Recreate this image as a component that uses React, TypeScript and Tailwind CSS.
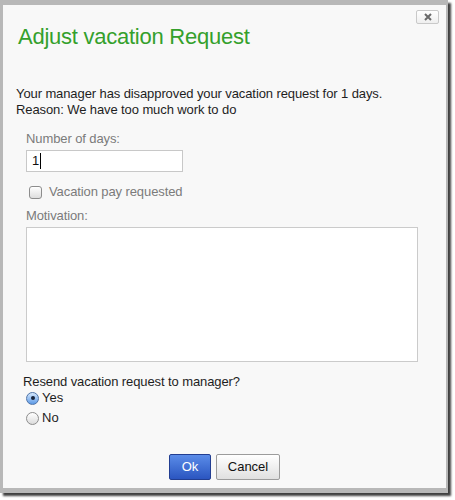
import React from 'react';

const font = { fontFamily: '"Liberation Sans", Arial, sans-serif' };

function Checkbox() {
    return (
        <span className="block w-[13px] h-[13px] rounded-[3px] border border-[#8d8d8d] bg-gradient-to-b from-white to-[#dedede] shadow-[inset_0_1px_0_#fff]" />
    );
}

function Radio({ checked }: { checked?: boolean }) {
    if (checked) {
        return (
            <span className="flex items-center justify-center w-[13px] h-[13px] rounded-full border border-[#4f74a8] bg-gradient-to-b from-[#d6e8fc] to-[#5c9ae6]">
                <span className="block w-[4px] h-[4px] rounded-full bg-[#17233a]" />
            </span>
        );
    }
    return (
        <span className="block w-[13px] h-[13px] rounded-full border border-[#8d8d8d] bg-gradient-to-b from-white to-[#dcdcdc]" />
    );
}

export default function App() {
    return (
        <div className="w-[455px] h-[500px] bg-white overflow-hidden" style={font}>
            {/* frame */}
            <div className="w-[448px] h-[493px] bg-[#b8b8b8] pt-[5px] pl-[3px] shadow-[3px_3px_2px_rgba(0,0,0,0.75)]">
                <div className="relative w-[443px] h-[483px] bg-[#f8f8f8] flex flex-col">
                    {/* close */}
                    <button className="absolute top-[5px] right-[7px] w-[23px] h-[14px] flex items-center justify-center rounded-[2px] border border-[#c9c9c9] bg-gradient-to-b from-white to-[#efefef]">
                        <svg width="8" height="8" viewBox="0 0 8 8">
                            <path d="M1 1L7 7M7 1L1 7" stroke="#6a6a6a" strokeWidth="2" />
                        </svg>
                    </button>

                    <h1 className="mt-[19px] ml-[15px] text-[22px] leading-[26px] tracking-[-0.25px] text-[#34a02c] font-normal">
                        Adjust vacation Request
                    </h1>

                    <p className="mt-[36px] ml-[13px] text-[13px] leading-[16px] tracking-[-0.1px] text-[#1e1e1e]">
                        Your manager has disapproved your vacation request for 1 days.
                        <br />
                        Reason: We have too much work to do
                    </p>

                    {/* form */}
                    <div className="ml-[23px] flex flex-col text-[13px] leading-[16px] tracking-[-0.1px]">
                        <label className="mt-[13px] text-[#7b7b7b]">Number of days:</label>
                        <div className="mt-[3px] w-[157px] h-[22px] border border-[#c8c8c8] bg-white flex items-center pl-[5px] text-[#111]">
                            <span className="text-[13px]">1</span>
                            <span className="block w-px h-[16px] bg-black ml-[1px]" />
                        </div>

                        <div className="mt-[12px] flex items-center gap-[7px] pl-[3px] h-[16px]">
                            <Checkbox />
                            <span className="text-[#7b7b7b]">Vacation pay requested</span>
                        </div>

                        <label className="mt-[8px] text-[#7b7b7b]">Motivation:</label>
                        <div className="mt-[3px] w-[392px] h-[135px] border border-[#cbcbcb] bg-white" />
                    </div>

                    <p className="mt-[12px] ml-[20px] text-[13px] leading-[16px] tracking-[-0.1px] text-[#1e1e1e]">
                        Resend vacation request to manager?
                    </p>
                    <div className="ml-[23px] flex flex-col gap-[4px] text-[13px] leading-[16px] text-[#1e1e1e]">
                        <div className="flex items-center gap-[3px] h-[16px]">
                            <Radio checked />
                            <span>Yes</span>
                        </div>
                        <div className="flex items-center gap-[3px] h-[16px]">
                            <Radio />
                            <span>No</span>
                        </div>
                    </div>

                    {/* buttons */}
                    <div className="mt-[28px] flex justify-center gap-[5px] text-[13px]">
                        <button className="w-[42px] h-[26px] rounded-[2px] border border-[#223e91] bg-gradient-to-b from-[#5b8ce8] to-[#2b55c0] text-white">
                            Ok
                        </button>
                        <button className="w-[64px] h-[26px] rounded-[2px] border border-[#9c9c9c] bg-gradient-to-b from-white to-[#e0e0e0] text-[#111]">
                            Cancel
                        </button>
                    </div>
                </div>
            </div>
        </div>
    );
}
